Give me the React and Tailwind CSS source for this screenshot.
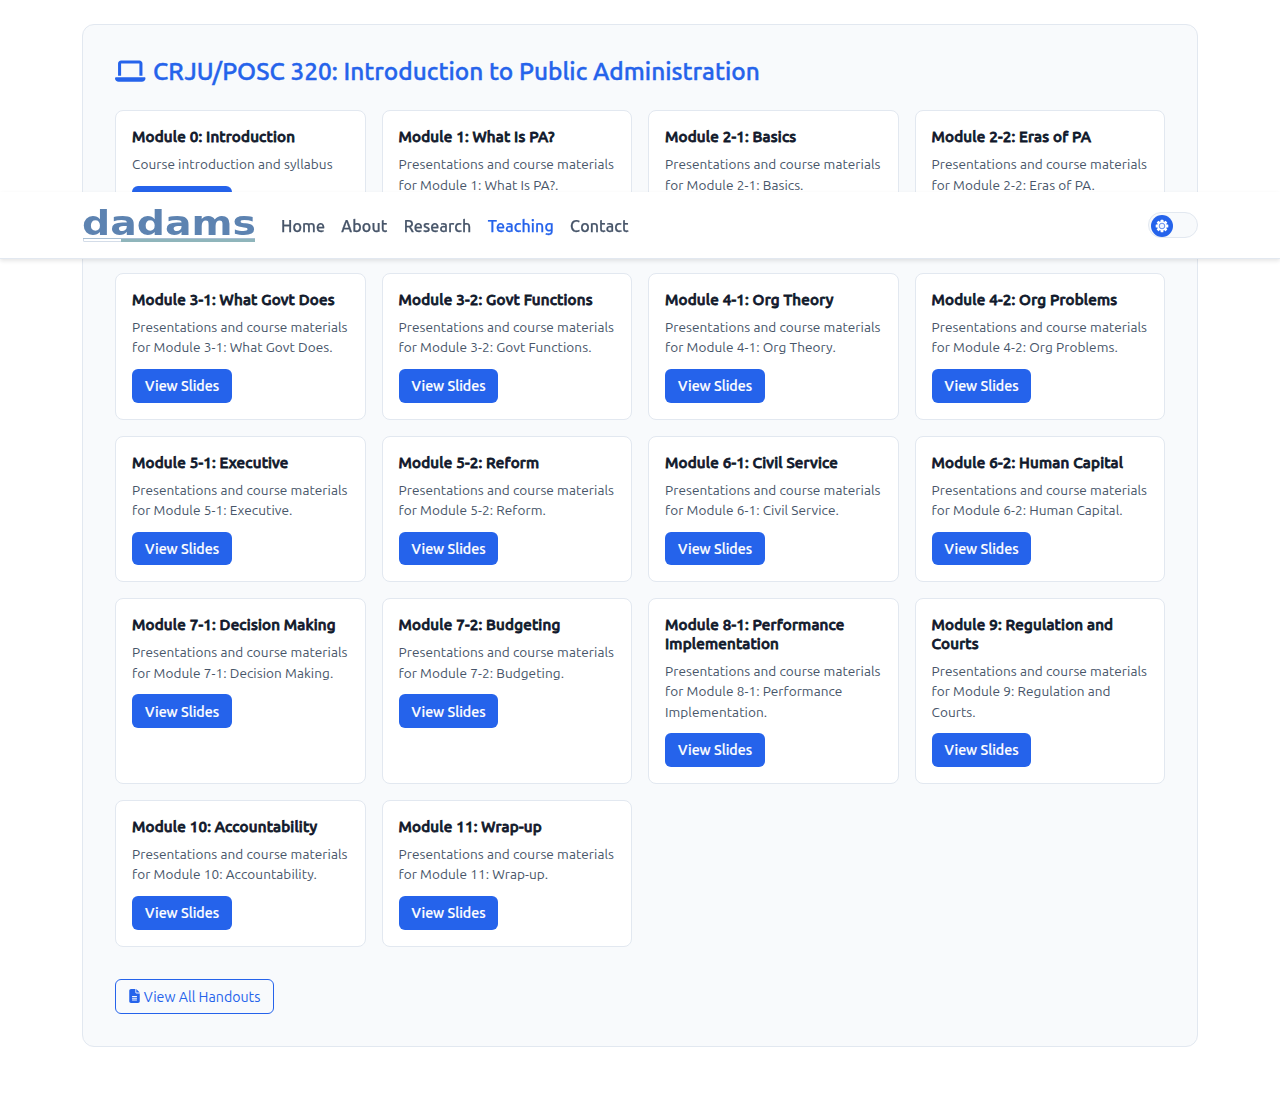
import { FaLaptop, FaFileLines } from "react-icons/fa6";

const modules = [
  ["Module 0: Introduction", "Course introduction and syllabus"],
  ["Module 1: What Is PA?"],
  ["Module 2-1: Basics"],
  ["Module 2-2: Eras of PA"],
  ["Module 3-1: What Govt Does"],
  ["Module 3-2: Govt Functions"],
  ["Module 4-1: Org Theory"],
  ["Module 4-2: Org Problems"],
  ["Module 5-1: Executive"],
  ["Module 5-2: Reform"],
  ["Module 6-1: Civil Service"],
  ["Module 6-2: Human Capital"],
  ["Module 7-1: Decision Making"],
  ["Module 7-2: Budgeting"],
  ["Module 8-1: Performance Implementation"],
  ["Module 9: Regulation and Courts"],
  ["Module 10: Accountability"],
  ["Module 11: Wrap-up"],
];

const links = ["Home", "About", "Research", "Teaching", "Contact"];

function Logo() {
  return (
    <svg width="174" height="36" viewBox="0 0 174 36" className="shrink-0 overflow-visible" aria-label="dadams">
      <text
        x="0"
        y="27.8"
        textLength="174"
        lengthAdjust="spacingAndGlyphs"
        fontSize="33"
        fontWeight="700"
        fontFamily="'DejaVu Sans', sans-serif"
        fill="#5d83b1"
      >
        dadams
      </text>
      <rect x="1.5" y="31.5" width="39" height="3" rx="0.5" fill="#ffffff" stroke="#d3dce8" />
      <rect x="39" y="31" width="134" height="4" rx="0.5" fill="#8fb5bb" />
      <rect x="1" y="31" width="172" height="1" fill="#a9bfd3" />
    </svg>
  );
}

function Gear() {
  return (
    <svg width="14" height="14" viewBox="-7 -7 14 14">
      {[0, 45, 90, 135].map((a) => (
        <rect key={a} x="-1.4" y="-6.3" width="2.8" height="12.6" rx="0.5" fill="#fff" transform={`rotate(${a})`} />
      ))}
      <circle r="4.7" fill="#fff" />
      <circle r="2.8" fill="#f1f5fe" stroke="#2563eb" strokeWidth="0.7" />
    </svg>
  );
}

function Navbar() {
  return (
    <header className="fixed inset-x-0 top-[192px] z-10 h-[67px] border-b border-[#e2e8f0] bg-white shadow-[0_2px_4px_rgba(0,0,0,0.1)]">
      <div className="mx-auto flex h-full w-[1116px] items-center">
        <Logo />
        <nav className="ml-[25px] flex gap-[16.2px] pt-[2px] text-[16px] font-medium leading-6 tracking-[0.13px] text-[#475569] [-webkit-text-stroke:0.25px_currentColor]">
          {links.map((l) => (
            <a key={l} className={l === "Teaching" ? "text-[#2563eb]" : ""}>
              {l}
            </a>
          ))}
        </nav>
        <div className="ml-auto flex h-[26px] w-[50px] items-center rounded-full border border-[#e2e8f0] bg-[#f8fafc] pl-[2px] pt-[2px]">
          <div className="flex size-[22px] items-center justify-center rounded-full bg-[#2563eb]">
            <Gear />
          </div>
        </div>
      </div>
    </header>
  );
}

export default function App() {
  return (
    <div className="min-h-[1104px] bg-white pt-6 font-['Ubuntu','Noto_Sans',sans-serif] text-[#0f172a]">
      <Navbar />
      <main className="mx-auto w-[1116px] rounded-xl border border-[#e2e8f0] bg-[#f8fafc] p-8">
        <h2 className="mb-6 flex h-[29.2px] items-center gap-[7.5px] text-[24.4px] font-medium leading-[1.2] tracking-[0.02px] text-[#2563eb] [-webkit-text-stroke:0.4px_#2563eb]">
          <FaLaptop className="h-[24.4px] w-[30.5px]" />
          CRJU/POSC 320: Introduction to Public Administration
        </h2>
        <div className="grid grid-cols-4 gap-4">
          {modules.map(([title, text]) => (
            <article key={title} className="rounded-lg border border-[#e2e8f0] bg-white px-4 pb-4 pt-[17px]">
              <h3 className="mb-[7.75px] text-[15.2px] font-medium leading-[18.34px] tracking-[0.18px] [-webkit-text-stroke:0.8px_#0f172a]">
                {title}
              </h3>
              <p className="mb-[11.25px] text-[13.6px] leading-[1.5] tracking-[0.06px] text-[#475569]">
                {text || `Presentations and course materials for ${title}.`}
              </p>
              <a className="flex h-[33.6px] w-[99.6px] items-center justify-center rounded-md bg-[#2563eb] pl-[0.6px] pt-[2.2px] text-[14.2px] font-medium text-white [-webkit-text-stroke:0.2px_#ffffff]">
                View Slides
              </a>
            </article>
          ))}
        </div>
        <a className="mt-8 flex h-[35px] w-[159px] items-center justify-center gap-[4px] rounded-md border border-[#2563eb] text-[14.2px] text-[#2563eb]">
          <FaFileLines className="h-[14px] w-[11px]" />
          <span className="pt-[3.4px]">View All Handouts</span>
        </a>
      </main>
    </div>
  );
}
